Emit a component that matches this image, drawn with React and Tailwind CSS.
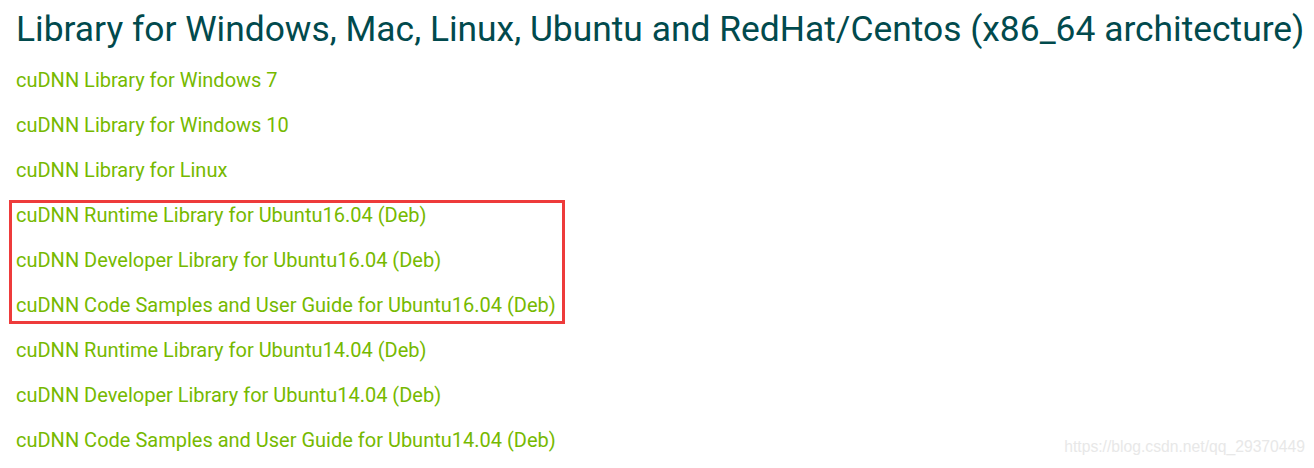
import React from 'react';

const links = [
  'cuDNN Library for Windows 7',
  'cuDNN Library for Windows 10',
  'cuDNN Library for Linux',
];
const boxed = [
  'cuDNN Runtime Library for Ubuntu16.04 (Deb)',
  'cuDNN Developer Library for Ubuntu16.04 (Deb)',
  'cuDNN Code Samples and User Guide for Ubuntu16.04 (Deb)',
];
const rest = [
  'cuDNN Runtime Library for Ubuntu14.04 (Deb)',
  'cuDNN Developer Library for Ubuntu14.04 (Deb)',
  'cuDNN Code Samples and User Guide for Ubuntu14.04 (Deb)',
];

function Item({ label }) {
  return (
    <div className="h-[45px] flex items-center">
      <a className="text-[20px] leading-[24px] text-[#76b900] whitespace-nowrap cursor-pointer">{label}</a>
    </div>
  );
}

export default function App() {
  return (
    <div className="relative w-[1314px] h-[468px] bg-white overflow-hidden px-4 font-['Roboto',sans-serif]">
      <div className="h-[57px] pt-[6px]">
        <h2 className="text-[35.4px] leading-[46px] text-[#014a4d] whitespace-nowrap">
          Library for Windows, Mac, Linux, Ubuntu and RedHat/Centos (x86_64 architecture)
        </h2>
      </div>
      {links.map(l => <Item key={l} label={l} />)}
      <div className="relative">
        {boxed.map(l => <Item key={l} label={l} />)}
        {/* highlight annotation */}
        <div className="absolute left-[-7px] top-[8px] w-[556px] h-[124px] border-[3px] border-[#ee3b3b] pointer-events-none" />
      </div>
      {rest.map(l => <Item key={l} label={l} />)}
      <div className="absolute right-[9px] bottom-[9px] text-[15.7px] text-[#e8e8e8] font-['Liberation_Sans',sans-serif]">
        https://blog.csdn.net/qq_29370449
      </div>
    </div>
  );
}
